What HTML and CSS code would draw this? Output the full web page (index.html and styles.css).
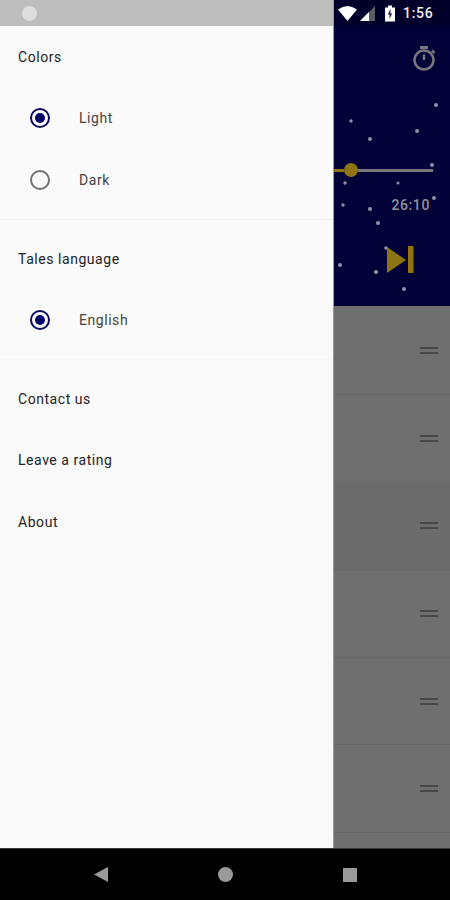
FILE: index.html
```html
<!DOCTYPE html>
<html lang="en">
<head>
  <meta charset="UTF-8">
  <meta name="viewport" content="width=device-width, initial-scale=1.0">
  <title>Tales</title>
  <link rel="stylesheet" href="styles.css">
</head>
<body>

  <div class="screen">
    <!-- Drawer -->
    <div class="drawer">
      <div class="drawer-status"><span class="status-dot"></span></div>
      <div class="menu">
        <div class="menu-row">Colors</div>
        <div class="menu-row radio-row"><span class="radio checked"></span>Light</div>
        <div class="menu-row radio-row"><span class="radio"></span>Dark</div>
        <div class="divider"></div>
        <div class="menu-row">Tales language</div>
        <div class="menu-row radio-row"><span class="radio checked"></span>English</div>
        <div class="divider faint"></div>
        <div class="menu-row">Contact us</div>
        <div class="menu-row">Leave a rating</div>
        <div class="menu-row">About</div>
      </div>
    </div>

    <!-- Dimmed app behind the drawer -->
    <div class="app">
      <div class="status-bar">
        <svg class="status-icons" width="60" height="18" viewBox="0 0 60 18">
          <path d="M0 5.5 Q9.500 -1.500 19 5.500 L9.500 17 Z" fill="#fff"/>
          <path d="M22 17 L37 2 V17 Z" fill="#5c5c66"/>
          <path d="M22 17 L31 8 V17 Z" fill="#fff"/>
          <path d="M47 3.500 H50 V1.500 H54 V3.500 H57 V17.500 H47 Z" fill="#fff"/>
          <path d="M52.500 5 L49.800 10.500 H51.500 V15 L54.200 9.500 H52.500 Z" fill="#20203a"/>
        </svg>
        <span class="clock">1:56</span>
      </div>

      <div class="toolbar">
        <svg width="24" height="26" viewBox="0 0 24 26">
          <path d="M8 1.500 H16" stroke="#77777c" stroke-width="3" fill="none"/>
          <circle cx="12" cy="14" r="9.500" stroke="#77777c" stroke-width="2.500" fill="none"/>
          <path d="M12 8.500 V14" stroke="#77777c" stroke-width="2.500" fill="none"/>
          <path d="M20 4.500 L22.500 7" stroke="#77777c" stroke-width="2.500" fill="none"/>
        </svg>
      </div>

      <div class="player">
        <svg class="stars" width="117" height="216" viewBox="0 0 117 216">
          <g fill="#8f90ad">
            <circle cx="103" cy="15" r="2"/>
            <circle cx="18" cy="31" r="1.700"/>
            <circle cx="37" cy="49" r="2"/>
            <circle cx="84" cy="41" r="2"/>
            <circle cx="99" cy="75" r="2"/>
            <circle cx="12" cy="93" r="1.700"/>
            <circle cx="65" cy="93" r="1.500"/>
            <circle cx="10" cy="115" r="1.700"/>
            <circle cx="37" cy="119" r="2"/>
            <circle cx="45" cy="133" r="2"/>
            <circle cx="101" cy="108" r="2"/>
            <circle cx="53" cy="158" r="1.800"/>
            <circle cx="7" cy="175" r="2"/>
            <circle cx="43" cy="182" r="2"/>
            <circle cx="71" cy="199" r="2"/>
          </g>
        </svg>
        <div class="slider">
          <span class="slider-fill"></span>
          <span class="slider-thumb"></span>
          <span class="slider-track"></span>
        </div>
        <div class="time">26:10</div>
        <svg class="skip" width="28" height="28" viewBox="0 0 28 28">
          <path d="M1 1 L20 14 L1 27 Z" fill="#8f7414"/>
          <rect x="22" y="0" width="5.500" height="27" fill="#8f7414"/>
        </svg>
      </div>

      <div class="list">
        <div class="list-row"><span class="handle"></span></div>
        <div class="list-row"><span class="handle"></span></div>
        <div class="list-row darker"><span class="handle"></span></div>
        <div class="list-row"><span class="handle"></span></div>
        <div class="list-row"><span class="handle"></span></div>
        <div class="list-row"><span class="handle"></span></div>
        <div class="list-row"></div>
      </div>
    </div>
  </div>

  <!-- Navigation bar -->
  <div class="nav-bar">
    <svg width="14" height="15" viewBox="0 0 14 15"><path d="M14 0 V15 L0 7.500 Z" fill="#9a9a9a"/></svg>
    <span class="nav-circle"></span>
    <span class="nav-square"></span>
  </div>

</body>
</html>
```

FILE: styles.css
```css
* {
  box-sizing: border-box;
}

html, body {
  margin: 0;
  padding: 0;
}

body {
  width: 450px;
  height: 900px;
  display: flex;
  flex-direction: column;
  overflow: hidden;
  font-family: Roboto, "Liberation Sans", sans-serif;
  background: #000;
}

.screen {
  flex: 1;
  display: flex;
  min-height: 0;
}

/* Drawer */
.drawer {
  width: 333px;
  background: #fafafa;
}

.drawer-status {
  height: 26px;
  background: #bdbdbd;
  display: flex;
  align-items: center;
  padding-left: 22px;
}

.status-dot {
  width: 15px;
  height: 15px;
  border-radius: 50%;
  background: #dedede;
}

.menu-row {
  height: 61.5px;
  display: flex;
  align-items: center;
  padding-left: 18px;
  font-size: 14px;
  letter-spacing: 0.55px;
  color: #222;
}

.radio-row {
  padding-left: 30px;
  color: #444;
}

.radio {
  width: 20px;
  height: 20px;
  margin-right: 29px;
  border: 2px solid #707070;
  border-radius: 50%;
}

.radio.checked {
  border-color: #0a0a5c;
  padding: 3px;
  background: #00006a content-box;
}

.divider {
  height: 1px;
  margin: 8px 0 8.5px;
  background: #f0f0f0;
}

.divider.faint {
  margin-bottom: 8px;
  background: #f6f6f6;
}

/* App behind the drawer */
.app {
  flex: 1;
  min-width: 0;
  display: flex;
  flex-direction: column;
  border-left: 1px solid #9a9a9a;
}

.status-bar {
  height: 26px;
  display: flex;
  align-items: center;
  padding-left: 4px;
  background: #00002b;
}

.status-icons {
  flex: none;
}

.clock {
  margin-left: 5px;
  font-size: 14px;
  font-weight: 500;
  letter-spacing: 0.7px;
  color: #eee;
}

.toolbar {
  height: 64px;
  display: flex;
  justify-content: flex-end;
  padding: 20px 14px 0 0;
  background: #020138;
}

.player {
  position: relative;
  height: 216px;
  padding-top: 73px;
  background: #020138;
}

.stars {
  position: absolute;
  top: 0;
  left: -1px;
}

.slider {
  position: relative;
  height: 14px;
  margin-right: 17px;
  display: flex;
  align-items: center;
}

.slider-fill {
  width: 10px;
  height: 3px;
  background: #8f7414;
}

.slider-thumb {
  width: 14px;
  height: 14px;
  border-radius: 50%;
  background: #8f7414;
}

.slider-track {
  flex: 1;
  height: 3px;
  background: #77777c;
}

.time {
  position: relative;
  height: 20px;
  margin-top: 18px;
  padding-right: 20px;
  text-align: right;
  font-size: 14px;
  font-weight: 500;
  line-height: 20px;
  letter-spacing: 0.6px;
  color: #939397;
}

.skip {
  position: relative;
  display: block;
  margin: 31px 0 0 52px;
}

.list {
  flex: 1;
  min-height: 0;
  padding-top: 1.5px;
  overflow: hidden;
  background: #6f6f6f;
}

.list-row {
  height: 87.6px;
  display: flex;
  align-items: center;
  justify-content: flex-end;
  padding-right: 12px;
  border-bottom: 1px solid #676767;
}

.list-row.darker {
  background: #6c6c6c;
}

.handle {
  width: 18px;
  height: 7px;
  border-top: 2px solid #484848;
  border-bottom: 2px solid #484848;
}

/* Navigation bar */
.nav-bar {
  height: 52px;
  flex: none;
  display: flex;
  align-items: center;
  justify-content: space-between;
  padding: 0 93px 0 94px;
  background: #000;
  border-top: 1px solid #3a3a3a;
}

.nav-circle {
  width: 15px;
  height: 15px;
  border-radius: 50%;
  background: #9a9a9a;
}

.nav-square {
  width: 14px;
  height: 14px;
  background: #9a9a9a;
}
```
